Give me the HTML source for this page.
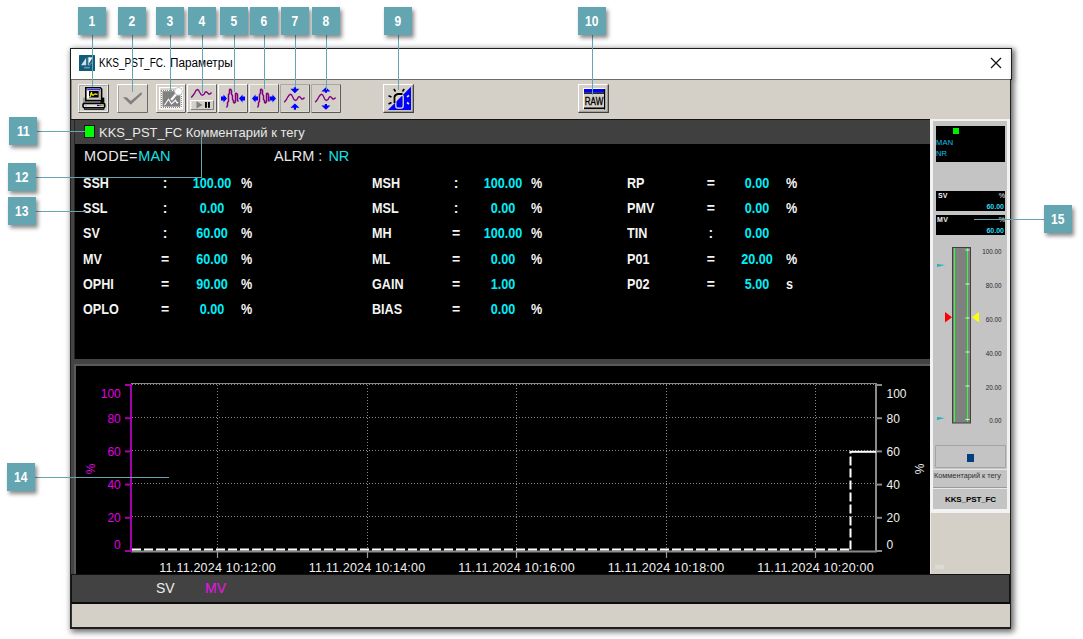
<!DOCTYPE html>
<html><head><meta charset="utf-8">
<style>
*{margin:0;padding:0;box-sizing:border-box;}
html,body{width:1083px;height:639px;overflow:hidden;background:#fff;position:relative;font-family:"Liberation Sans",sans-serif;}
.a{position:absolute;}
.cb{position:absolute;width:28px;height:28px;background:#64a5b2;color:#fff;font-weight:bold;font-size:14px;text-align:center;line-height:29px;box-shadow:2px 3px 4px rgba(0,0,0,0.45);z-index:20;}
.vl{position:absolute;width:1px;background:#64a5b2;z-index:19;}
.hl{position:absolute;height:1px;background:#64a5b2;z-index:19;}
.btn{position:absolute;top:84px;width:30px;height:29px;border-top:1px solid #fff;border-left:1px solid #fff;border-right:1px solid #6a6a6a;border-bottom:1px solid #6a6a6a;}
.btn2{position:absolute;top:84px;width:31px;height:29px;border-top:1px solid #fff;border-left:1px solid #fff;border-right:2px solid #404040;border-bottom:2px solid #404040;}
.btn svg,.btn2 svg{position:absolute;left:0;top:0;}
.lbl{position:absolute;color:#f4f4f4;font-weight:bold;font-size:14px;line-height:14px;transform:scaleX(0.9);transform-origin:0 0;white-space:nowrap;}
.val{position:absolute;color:#00eef8;font-weight:bold;font-size:14px;line-height:14px;text-align:center;width:60px;transform:scaleX(0.9);}
.sep{position:absolute;color:#f4f4f4;font-weight:bold;font-size:14px;line-height:14px;text-align:center;width:10px;}
.yl{position:absolute;color:#e000e0;font-size:12px;line-height:14px;text-align:right;width:30px;}
.yr{position:absolute;color:#f0f0f0;font-size:12px;line-height:14px;text-align:left;width:30px;}
.xl{position:absolute;color:#f0f0f0;font-size:12.5px;letter-spacing:0.2px;line-height:14px;text-align:center;width:140px;}
.rs{position:absolute;color:#282828;font-size:6.3px;line-height:8px;text-align:right;width:30px;}
</style></head><body>

<!-- window -->
<div class="a" style="left:70px;top:48px;width:941px;height:581px;border:1px solid #1e1e1e;border-bottom:2px solid #1e1e1e;box-shadow:2px 2px 6px 1px rgba(0,0,0,0.6);background:#d4d0c8;"></div>
<!-- title bar -->
<div class="a" style="left:71px;top:49px;width:940px;height:30px;background:#fff;"></div>
<div class="a" style="left:1011px;top:48px;width:1px;height:32px;background:#1e1e1e;box-shadow:2px 1px 4px rgba(0,0,0,0.5);"></div>
<div class="a" style="left:1010px;top:48px;width:1px;height:1px;background:#1e1e1e;"></div>
<svg class="a" style="left:79px;top:55px" width="16" height="16" viewBox="0 0 16 16">
<rect width="16" height="16" rx="0.5" fill="#135b7c"/>
<polygon points="2,10.3 7.2,2.8 7.2,10.3" fill="#cfe0ea"/>
<rect x="8.8" y="2.2" width="1.1" height="8.1" fill="#a9c6d6"/>
<polygon points="9.9,2.2 13.6,2.6 9.9,8.6" fill="#ffffff"/>
<path d="M10.2 10.3 L14 6.6" stroke="#7fa6bc" stroke-width="1"/>
<rect x="5.2" y="11.8" width="5.6" height="1.6" fill="#6d98b0"/>
</svg>
<div class="a" style="left:99.3px;top:56px;font-size:12px;line-height:14px;color:#000;white-space:nowrap;transform:scaleX(0.835);transform-origin:0 0;">KKS_PST_FC.</div>
<div class="a" style="left:170px;top:56px;font-size:12px;line-height:14px;color:#000;white-space:nowrap;transform:scaleX(0.98);transform-origin:0 0;">Параметры</div>
<svg class="a" style="left:990px;top:57px" width="12" height="12" viewBox="0 0 12 12"><path d="M1 1 L11 11 M11 1 L1 11" stroke="#111" stroke-width="1.2"/></svg>
<!-- toolbar line -->
<div class="a" style="left:71px;top:79px;width:939px;height:1px;background:#6e6a64;"></div>



<!-- main area -->
<div class="a" style="left:71px;top:119px;width:4px;height:455px;background:#444;"></div>
<div class="a" style="left:74px;top:119px;width:1px;height:240px;background:#262626;"></div>
<div class="a" style="left:71px;top:80px;width:1px;height:39px;background:#8a8680;"></div>
<!-- top panel -->
<div class="a" style="left:75px;top:119px;width:855px;height:240px;background:#000;"></div>
<div class="a" style="left:75px;top:119px;width:855px;height:24.5px;background:#404040;"></div>
<div class="a" style="left:71px;top:119px;width:859px;height:1px;background:#141414;"></div>
<div class="a" style="left:84px;top:125px;width:11px;height:12.5px;background:#00ff00;border:1px solid #111;"></div>
<div class="a" style="left:99px;top:125px;font-size:13px;line-height:16px;color:#e8e8e8;white-space:nowrap;">KKS_PST_FC Комментарий к тегу</div>
<div class="a" style="left:84px;top:148px;font-size:14.5px;line-height:17px;color:#e8e8e8;white-space:nowrap;letter-spacing:0.4px;">MODE=</div><div class="a" style="left:138.3px;top:148px;font-size:14.5px;line-height:17px;color:#18e0ea;white-space:nowrap;">MAN</div>
<div class="a" style="left:274px;top:148px;font-size:14.5px;line-height:17px;color:#e8e8e8;white-space:nowrap;">ALRM :</div><div class="a" style="left:328.4px;top:148px;font-size:14.5px;line-height:17px;color:#18e0ea;white-space:nowrap;">NR</div>
<!-- band -->
<div class="a" style="left:75px;top:359px;width:855px;height:5px;background:#434343;"></div>
<div class="a" style="left:74px;top:364px;width:856px;height:2px;background:#5a5a5a;"></div>
<div class="a" style="left:74px;top:364px;width:2px;height:210px;background:#5a5a5a;"></div>
<!-- chart panel -->
<div class="a" style="left:76px;top:366px;width:854px;height:208px;background:#000;"></div>
<!-- table -->
<div class="lbl" style="left:82.6px;top:175.8px">SSH</div>
<div class="sep" style="left:160.0px;top:175.8px">:</div>
<div class="val" style="left:181.7px;top:175.8px">100.00</div>
<div class="lbl" style="left:240.5px;top:175.8px">%</div>
<div class="lbl" style="left:82.6px;top:201.1px">SSL</div>
<div class="sep" style="left:160.0px;top:201.1px">:</div>
<div class="val" style="left:181.7px;top:201.1px">0.00</div>
<div class="lbl" style="left:240.5px;top:201.1px">%</div>
<div class="lbl" style="left:82.6px;top:226.4px">SV</div>
<div class="sep" style="left:160.0px;top:226.4px">:</div>
<div class="val" style="left:181.7px;top:226.4px">60.00</div>
<div class="lbl" style="left:240.5px;top:226.4px">%</div>
<div class="lbl" style="left:82.6px;top:251.7px">MV</div>
<div class="sep" style="left:160.0px;top:251.7px">=</div>
<div class="val" style="left:181.7px;top:251.7px">60.00</div>
<div class="lbl" style="left:240.5px;top:251.7px">%</div>
<div class="lbl" style="left:82.6px;top:277.0px">OPHI</div>
<div class="sep" style="left:160.0px;top:277.0px">=</div>
<div class="val" style="left:181.7px;top:277.0px">90.00</div>
<div class="lbl" style="left:240.5px;top:277.0px">%</div>
<div class="lbl" style="left:82.6px;top:302.3px">OPLO</div>
<div class="sep" style="left:160.0px;top:302.3px">=</div>
<div class="val" style="left:181.7px;top:302.3px">0.00</div>
<div class="lbl" style="left:240.5px;top:302.3px">%</div>
<div class="lbl" style="left:372.2px;top:175.8px">MSH</div>
<div class="sep" style="left:451.0px;top:175.8px">:</div>
<div class="val" style="left:472.6px;top:175.8px">100.00</div>
<div class="lbl" style="left:531.0px;top:175.8px">%</div>
<div class="lbl" style="left:372.2px;top:201.1px">MSL</div>
<div class="sep" style="left:451.0px;top:201.1px">:</div>
<div class="val" style="left:472.6px;top:201.1px">0.00</div>
<div class="lbl" style="left:531.0px;top:201.1px">%</div>
<div class="lbl" style="left:372.2px;top:226.4px">MH</div>
<div class="sep" style="left:451.0px;top:226.4px">=</div>
<div class="val" style="left:472.6px;top:226.4px">100.00</div>
<div class="lbl" style="left:531.0px;top:226.4px">%</div>
<div class="lbl" style="left:372.2px;top:251.7px">ML</div>
<div class="sep" style="left:451.0px;top:251.7px">=</div>
<div class="val" style="left:472.6px;top:251.7px">0.00</div>
<div class="lbl" style="left:531.0px;top:251.7px">%</div>
<div class="lbl" style="left:372.2px;top:277.0px">GAIN</div>
<div class="sep" style="left:451.0px;top:277.0px">=</div>
<div class="val" style="left:472.6px;top:277.0px">1.00</div>
<div class="lbl" style="left:372.2px;top:302.3px">BIAS</div>
<div class="sep" style="left:451.0px;top:302.3px">=</div>
<div class="val" style="left:472.6px;top:302.3px">0.00</div>
<div class="lbl" style="left:531.0px;top:302.3px">%</div>
<div class="lbl" style="left:627.3px;top:175.8px">RP</div>
<div class="sep" style="left:705.8px;top:175.8px">=</div>
<div class="val" style="left:727.2px;top:175.8px">0.00</div>
<div class="lbl" style="left:786.2px;top:175.8px">%</div>
<div class="lbl" style="left:627.3px;top:201.1px">PMV</div>
<div class="sep" style="left:705.8px;top:201.1px">=</div>
<div class="val" style="left:727.2px;top:201.1px">0.00</div>
<div class="lbl" style="left:786.2px;top:201.1px">%</div>
<div class="lbl" style="left:627.3px;top:226.4px">TIN</div>
<div class="sep" style="left:705.8px;top:226.4px">:</div>
<div class="val" style="left:727.2px;top:226.4px">0.00</div>
<div class="lbl" style="left:627.3px;top:251.7px">P01</div>
<div class="sep" style="left:705.8px;top:251.7px">=</div>
<div class="val" style="left:727.2px;top:251.7px">20.00</div>
<div class="lbl" style="left:786.2px;top:251.7px">%</div>
<div class="lbl" style="left:627.3px;top:277.0px">P02</div>
<div class="sep" style="left:705.8px;top:277.0px">=</div>
<div class="val" style="left:727.2px;top:277.0px">5.00</div>
<div class="lbl" style="left:786.2px;top:277.0px">s</div>
<!-- chart -->
<svg class="a" style="left:76px;top:366px" width="854" height="208" viewBox="76 366 854 208">
<line x1="131" y1="383.5" x2="876" y2="383.5" stroke="#8a8a8a" stroke-width="1"/>
<line x1="132" y1="384.5" x2="876" y2="384.5" stroke="#888" stroke-width="1" stroke-dasharray="1 2"/>
<line x1="132" y1="417.5" x2="876" y2="417.5" stroke="#888" stroke-width="1" stroke-dasharray="1 2"/>
<line x1="132" y1="450.5" x2="876" y2="450.5" stroke="#888" stroke-width="1" stroke-dasharray="1 2"/>
<line x1="132" y1="483.5" x2="876" y2="483.5" stroke="#888" stroke-width="1" stroke-dasharray="1 2"/>
<line x1="132" y1="516.5" x2="876" y2="516.5" stroke="#888" stroke-width="1" stroke-dasharray="1 2"/>
<line x1="217.5" y1="385" x2="217.5" y2="551" stroke="#888" stroke-width="1" stroke-dasharray="1 2"/>
<line x1="217.5" y1="551" x2="217.5" y2="558" stroke="#9a9a9a" stroke-width="1.2"/>
<line x1="367.5" y1="385" x2="367.5" y2="551" stroke="#888" stroke-width="1" stroke-dasharray="1 2"/>
<line x1="367.5" y1="551" x2="367.5" y2="558" stroke="#9a9a9a" stroke-width="1.2"/>
<line x1="516.5" y1="385" x2="516.5" y2="551" stroke="#888" stroke-width="1" stroke-dasharray="1 2"/>
<line x1="516.5" y1="551" x2="516.5" y2="558" stroke="#9a9a9a" stroke-width="1.2"/>
<line x1="666.5" y1="385" x2="666.5" y2="551" stroke="#888" stroke-width="1" stroke-dasharray="1 2"/>
<line x1="666.5" y1="551" x2="666.5" y2="558" stroke="#9a9a9a" stroke-width="1.2"/>
<line x1="815.5" y1="385" x2="815.5" y2="551" stroke="#888" stroke-width="1" stroke-dasharray="1 2"/>
<line x1="815.5" y1="551" x2="815.5" y2="558" stroke="#9a9a9a" stroke-width="1.2"/>
<line x1="131" y1="551.5" x2="877" y2="551.5" stroke="#8a8a8a" stroke-width="2"/>
<line x1="876" y1="383" x2="876" y2="552" stroke="#8a8a8a" stroke-width="2"/>
<line x1="876" y1="385.0" x2="882" y2="385.0" stroke="#8a8a8a" stroke-width="2"/>
<line x1="125" y1="385.0" x2="131" y2="385.0" stroke="#a800b0" stroke-width="2"/>
<line x1="876" y1="418.2" x2="882" y2="418.2" stroke="#8a8a8a" stroke-width="2"/>
<line x1="125" y1="418.2" x2="131" y2="418.2" stroke="#a800b0" stroke-width="2"/>
<line x1="876" y1="451.4" x2="882" y2="451.4" stroke="#8a8a8a" stroke-width="2"/>
<line x1="125" y1="451.4" x2="131" y2="451.4" stroke="#a800b0" stroke-width="2"/>
<line x1="876" y1="484.6" x2="882" y2="484.6" stroke="#8a8a8a" stroke-width="2"/>
<line x1="125" y1="484.6" x2="131" y2="484.6" stroke="#a800b0" stroke-width="2"/>
<line x1="876" y1="517.8" x2="882" y2="517.8" stroke="#8a8a8a" stroke-width="2"/>
<line x1="125" y1="517.8" x2="131" y2="517.8" stroke="#a800b0" stroke-width="2"/>
<line x1="876" y1="551.0" x2="882" y2="551.0" stroke="#8a8a8a" stroke-width="2"/>
<line x1="125" y1="551.0" x2="131" y2="551.0" stroke="#a800b0" stroke-width="2"/>
<line x1="131" y1="384" x2="131" y2="552" stroke="#a800b0" stroke-width="2"/>
<path d="M132 549.5 H850.5" stroke="#fff" stroke-width="2" stroke-dasharray="9 3" fill="none"/>
<path d="M850.5 549.5 V451.8" stroke="#fff" stroke-width="2" stroke-dasharray="9 3" fill="none"/>
<path d="M849.5 451.8 H876" stroke="#fff" stroke-width="2" fill="none"/>
</svg>
<div class="yl" style="left:90.8px;top:386.6px">100</div>
<div class="yr" style="left:886.5px;top:386.6px">100</div>
<div class="yl" style="left:90.8px;top:411.8px">80</div>
<div class="yr" style="left:886.5px;top:411.8px">80</div>
<div class="yl" style="left:90.8px;top:444.8px">60</div>
<div class="yr" style="left:886.5px;top:444.8px">60</div>
<div class="yl" style="left:90.8px;top:478.4px">40</div>
<div class="yr" style="left:886.5px;top:478.4px">40</div>
<div class="yl" style="left:90.8px;top:511.0px">20</div>
<div class="yr" style="left:886.5px;top:511.0px">20</div>
<div class="yl" style="left:90.8px;top:537.6px">0</div>
<div class="yr" style="left:886.5px;top:537.6px">0</div>
<div class="xl" style="left:147.7px;top:560.5px">11.11.2024 10:12:00</div>
<div class="xl" style="left:297.0px;top:560.5px">11.11.2024 10:14:00</div>
<div class="xl" style="left:446.5px;top:560.5px">11.11.2024 10:16:00</div>
<div class="xl" style="left:596.0px;top:560.5px">11.11.2024 10:18:00</div>
<div class="xl" style="left:745.5px;top:560.5px">11.11.2024 10:20:00</div>
<div class="a" style="left:83px;top:462px;width:16px;height:14px;font-size:12px;line-height:14px;color:#e000e0;transform:rotate(-90deg);text-align:center;">%</div>
<div class="a" style="left:912px;top:462px;width:16px;height:14px;font-size:12px;line-height:14px;color:#f0f0f0;transform:rotate(-90deg);text-align:center;">%</div>
<!-- right panel -->
<div class="a" style="left:930px;top:119px;width:80px;height:394px;background:#f2f2f2;"></div>
<div class="a" style="left:933px;top:121px;width:74px;height:388px;background:#c4c4c4;"></div>
<div class="a" style="left:936px;top:126px;width:69px;height:36px;background:#000;"></div>
<div class="a" style="left:953px;top:127.5px;width:6px;height:6.5px;background:#00ee00;"></div>
<div class="a" style="left:936px;top:138px;font-size:7.5px;line-height:9px;color:#12c0ec;letter-spacing:0.3px;">MAN</div>
<div class="a" style="left:936px;top:149px;font-size:7.5px;line-height:9px;color:#12c0ec;">NR</div>
<div class="a" style="left:936px;top:190.5px;width:69px;height:20px;background:#000;"></div>
<div class="a" style="left:938px;top:191px;font-size:7px;line-height:9px;color:#f0f0f0;font-weight:bold;">SV</div>
<div class="a" style="left:995px;top:191px;font-size:7px;line-height:9px;color:#f0f0f0;width:10px;text-align:right;">%</div>
<div class="a" style="left:965px;top:202px;font-size:7px;line-height:9px;color:#30d8f0;width:39px;text-align:right;font-weight:bold;">60.00</div>
<div class="a" style="left:936px;top:214.5px;width:69px;height:20px;background:#000;"></div>
<div class="a" style="left:937px;top:215px;font-size:7px;line-height:9px;color:#f0f0f0;font-weight:bold;letter-spacing:0.5px;">MV</div>
<div class="a" style="left:995px;top:215px;font-size:7px;line-height:9px;color:#f0f0f0;width:10px;text-align:right;">%</div>
<div class="a" style="left:965px;top:226px;font-size:7px;line-height:9px;color:#30d8f0;width:39px;text-align:right;font-weight:bold;">60.00</div>
<svg class="a" style="left:930px;top:240px" width="80" height="190" viewBox="930 240 80 190">
<rect x="952.5" y="247.5" width="18" height="175.5" fill="#808080" stroke="#404040" stroke-width="1"/>
<line x1="954.5" y1="248" x2="954.5" y2="422" stroke="#30ff30" stroke-width="1"/>
<line x1="967.5" y1="248" x2="967.5" y2="422" stroke="#30ff30" stroke-width="1"/>
<path d="M965.5 250 H969.5 M965.5 284 H969.5 M965.5 318 H969.5 M965.5 352 H969.5 M965.5 386 H969.5 M965.5 419.5 H969.5" stroke="#d0ffd0" stroke-width="1"/>
<path d="M945 312 L952 317.3 L945 322.5 Z" fill="#ff0000"/>
<path d="M979 312 L972 317.3 L979 322.5 Z" fill="#ffff00"/>
<path d="M937 264 L945 265 L937 267 Z" fill="#20b0c0"/>
<path d="M937 417 L945 418 L937 420 Z" fill="#20b0c0"/>
</svg>
<div class="rs" style="left:971.5px;top:247.5px;">100.00</div>
<div class="rs" style="left:971.5px;top:281.5px;">80.00</div>
<div class="rs" style="left:971.5px;top:315.5px;">60.00</div>
<div class="rs" style="left:971.5px;top:349.5px;">40.00</div>
<div class="rs" style="left:971.5px;top:383.5px;">20.00</div>
<div class="rs" style="left:971.5px;top:416.5px;">0.00</div>
<div class="a" style="left:935px;top:445px;width:71px;height:23px;border:1px solid #a4a4a4;border-radius:1px;"></div>
<div class="a" style="left:933px;top:468.5px;width:74px;height:1.5px;background:#e4e4e4;"></div>
<div class="a" style="left:967px;top:454px;width:7px;height:7.5px;background:#003f7f;"></div>
<div class="a" style="left:934px;top:471px;font-size:7.3px;line-height:9px;color:#303030;white-space:nowrap;">Комментарий к тегу</div>
<div class="a" style="left:933px;top:487px;width:74px;height:1px;background:#9a9a9a;"></div>
<div class="a" style="left:933px;top:488px;width:74px;height:1px;background:#e8e8e8;"></div>
<div class="a" style="left:930px;top:495px;width:81px;text-align:center;font-size:8px;line-height:10px;color:#000;font-weight:bold;letter-spacing:-0.1px;">KKS_PST_FC</div>
<div class="a" style="left:930px;top:513px;width:1px;height:61px;background:#eceae4;"></div>
<div class="a" style="left:935px;top:565px;width:9px;height:4px;background:#dcdad6;"></div>
<!-- legend -->
<div class="a" style="left:71px;top:574px;width:939px;height:30px;background:#424242;border:1px solid #111;border-bottom:2px solid #0c0c0c;"></div>
<div class="a" style="left:71px;top:604px;width:1px;height:23px;background:#333;"></div>
<div class="a" style="left:156px;top:581px;font-size:14px;line-height:15px;color:#ececec;">SV</div>
<div class="a" style="left:205px;top:581px;font-size:14px;line-height:15px;color:#f010f0;">MV</div>

<!-- toolbar buttons -->
<svg class="a" style="left:78px;top:84px" width="31" height="29" viewBox="-1 0 31 29">
<path d="M-0.5 28.5 V0.5 H29.5" fill="none" stroke="#f4f4f4"/>
<path d="M0.5 28 V1.5 H29" fill="none" stroke="#a8a8a8"/>
<path d="M-0.5 28.5 H29.5 V0.5" fill="none" stroke="#555"/>
<path d="M0.5 27.5 H28.5 V1.5" fill="none" stroke="#ebebeb"/>
<rect x="3.9" y="13.6" width="2.3" height="5.2" fill="#9a9a9a"/>
<rect x="21.5" y="13.6" width="3.8" height="5.2" fill="#000"/>
<path d="M6.8 3.8 H21.4 L22.6 5 V16.6 H6.8 Z" fill="#fff" stroke="#000" stroke-width="1.6"/>
<path d="M21 5 V15.2 H8" fill="none" stroke="#a0a0a0" stroke-width="1.5"/>
<rect x="8.2" y="5.2" width="12.9" height="1.1" fill="#0000ff"/>
<rect x="10" y="7" width="9.7" height="6.6" fill="#000"/>
<path d="M10.3 12.7 L11.6 12.2 L11.9 9.2 L12.6 8.6 L13.1 10.8 L14.2 11.3 L15.2 10.2 L16.4 9.9 L17.3 10.4 L18.6 10" fill="none" stroke="#ffff00" stroke-width="1.1"/>
<rect x="4" y="19.4" width="21.8" height="4.4" rx="1.6" fill="#e2dfd8" stroke="#000" stroke-width="1.6"/>
<rect x="5.1" y="23.5" width="20.2" height="2.3" fill="#000"/>
<rect x="6" y="24.3" width="18.5" height="0.6" fill="#777"/>
<rect x="18" y="20.9" width="2.2" height="1.2" fill="#0000ff"/><rect x="20.2" y="20.9" width="2" height="1.2" fill="#ff2020"/><rect x="22.2" y="20.9" width="2.6" height="1.2" fill="#20e020"/>
<rect x="6.1" y="21.1" width="1.6" height="0.7" fill="#999"/>
</svg>
<svg class="a" style="left:117px;top:84px" width="31" height="29" viewBox="0 0 31 29">
<path d="M0.5 28.5 V0.5 H30.5" fill="none" stroke="#fff"/>
<path d="M1.5 28 V1.5" stroke="#a8a49c"/>
<path d="M0.5 28.5 H30.5 V0.5" fill="none" stroke="#6a6a6a"/>
<path d="M5.9 13.2 L9.7 13.2 L13.75 17 L24.4 7.9 L25 10.3 L13.75 20.8 Z" fill="#808080"/>
</svg>
<svg class="a" style="left:156px;top:84px" width="30" height="29" viewBox="0 0 30 29">
<path d="M0.5 28 V0.5 H29" fill="none" stroke="#fff"/>
<path d="M0.5 28.5 H29.5 V0.5" fill="none" stroke="#5a5a5a"/>
<path d="M1.5 27.5 H28.5 V1.5" fill="none" stroke="#e4e2dc" stroke-width="0.6"/>
<rect x="3" y="3" width="24" height="22.5" fill="#fff"/>
<rect x="4.2" y="4.2" width="21.6" height="20.1" fill="#d4d0c8"/>
<g shape-rendering="crispEdges">
<rect x="5.5" y="6.5" width="20" height="17" fill="none" stroke="#8a8a8a" stroke-width="1"/>
<rect x="5.5" y="6.5" width="20" height="17" fill="none" stroke="#fff" stroke-width="1" stroke-dasharray="1 1"/>
</g>
<rect x="6.75" y="7.25" width="17.25" height="15.25" fill="#808080"/>
<path d="M8.5 21.25 L12.5 15.25 L15.5 20 L19.5 16.25 L21 19 L22.25 18.25" fill="none" stroke="#fff" stroke-width="1.1"/>
<path d="M15.2 15.8 L20.2 10.2" stroke="#a0a0a0" stroke-width="3.2"/>
<path d="M15.2 15.8 L20.2 10.2" stroke="#fff" stroke-width="2"/>
<circle cx="22.5" cy="7.4" r="3.9" fill="#fff" stroke="#b0b0b0" stroke-width="0.7"/>

</svg>
<svg class="a" style="left:187px;top:84px" width="30" height="29" viewBox="0 0 30 29">
<path d="M0.5 28 V0.5 H29" fill="none" stroke="#fff"/>
<path d="M0.5 28.5 H29.5 V0.5" fill="none" stroke="#5a5a5a"/>
<path d="M1.5 27.5 H28.5 V1.5" fill="none" stroke="#e4e2dc" stroke-width="0.6"/>
<g transform="translate(1,0)">
<path d="M3.25 13.5 L5.5 10.75 L6.75 9 L8 6.5 L9.25 5.5 L10.5 6 L11.5 8 L13 10.5 L14.5 11.25 L16 10.25 L17.25 8 L18.25 7.75 L19.5 8.75 L21 10.25 L22.5 9.75 L23.5 8.5" fill="none" stroke="#800080" stroke-width="1.35"/>
<rect x="2.5" y="16" width="23" height="9.5" fill="#d4d0c8"/>
<path d="M2.75 25.5 V16.5 H25.5" fill="none" stroke="#fff" stroke-width="1.2"/>
<path d="M3 25.5 H25.5 V16.5" fill="none" stroke="#808080" stroke-width="1"/>
<path d="M8.5 17.25 L14.5 21 L8.5 24.5 Z" fill="#808080"/>
<rect x="17" y="18" width="1.9" height="5.8" fill="#000"/><rect x="20" y="18" width="1.9" height="5.8" fill="#000"/>

</g>
</svg>
<svg class="a" style="left:218px;top:84px" width="30" height="29" viewBox="0 0 30 29">
<path d="M0.5 28 V0.5 H29" fill="none" stroke="#fff"/>
<path d="M0.5 28.5 H29.5 V0.5" fill="none" stroke="#5a5a5a"/>
<path d="M1.5 27.5 H28.5 V1.5" fill="none" stroke="#e4e2dc" stroke-width="0.6"/>
<g transform="translate(1,0)">
<path d="M7.5 23.5 L8.5 21.5 L8.5 18.5 L9.5 17.5 L9.5 10.5 L10.5 9.5 L10.5 5.5 L11.5 5.2 L12.5 6.5 L12.5 10.5 L13.5 11.5 L13.5 15.5 L14.5 16.5 L14.5 18.5 L15.5 19.2 L16.5 17.5 L16.5 9.5 L17.5 9.2 L18.5 10.5 L18.5 16.5 L19.5 17.5" fill="none" stroke="#800080" stroke-width="1.5" stroke-linejoin="bevel"/>
<path d="M2 12.5 H4.5 V10.5 L8 14.5 L4.5 18.5 V16.5 H2 Z" fill="#0000ff"/>
<path d="M26 12.5 H23.5 V10.5 L20 14.5 L23.5 18.5 V16.5 H26 Z" fill="#0000ff"/>

</g>
</svg>
<svg class="a" style="left:249px;top:84px" width="30" height="29" viewBox="0 0 30 29">
<path d="M0.5 28 V0.5 H29" fill="none" stroke="#f0f0f0"/>
<path d="M0.5 28.5 H29.5 V0.5" fill="none" stroke="#5a5a5a"/>
<path d="M1.5 27.5 H28.5 V1.5" fill="none" stroke="#e4e2dc" stroke-width="0.6"/>
<g transform="translate(1,0)">
<path d="M7.5 23.5 L8.5 21.5 L8.5 18.5 L9.5 17.5 L9.5 10.5 L10.5 9.5 L10.5 5.5 L11.5 5.2 L12.5 6.5 L12.5 10.5 L13.5 11.5 L13.5 15.5 L14.5 16.5 L14.5 18.5 L15.5 19.2 L16.5 17.5 L16.5 9.5 L17.5 9.2 L18.5 10.5 L18.5 16.5 L19.5 17.5" fill="none" stroke="#800080" stroke-width="1.5" stroke-linejoin="bevel"/>
<path d="M8 12.5 H5.5 V10.5 L2 14.5 L5.5 18.5 V16.5 H8 Z" fill="#0000ff"/>
<path d="M19.5 12.5 H22.5 V10.5 L26 14.5 L22.5 18.5 V16.5 H19.5 Z" fill="#0000ff"/>

</g>
</svg>
<svg class="a" style="left:280px;top:84px" width="30" height="29" viewBox="0 0 30 29">
<path d="M0.5 28 V0.5 H29" fill="none" stroke="#a8a8a8"/>
<path d="M0.5 28.5 H29.5 V0.5" fill="none" stroke="#5a5a5a"/>
<path d="M1.5 27.5 H28.5 V1.5" fill="none" stroke="#e4e2dc" stroke-width="0.6"/>
<path d="M4.25 18.25 L6.5 15.5 L7.75 13 L9 11.25 L10.25 10.25 L11.5 10.75 L12.5 12.5 L14 15.5 L15.5 16.5 L17 15.5 L18.25 13.25 L19.25 12.5 L20.5 13.5 L22 15.25 L23.5 14.75 L24.5 13.5" fill="none" stroke="#800080" stroke-width="1.35"/>
<path d="M13.8 3.2 H16 V4.8 H19.4 L14.9 9.2 L10.4 4.8 H13.8 Z" fill="#0000ff"/>
<path d="M13.8 25.8 H16 V23.7 H19.4 L14.9 19.6 L10.4 23.7 H13.8 Z" fill="#0000ff"/>

</svg>
<svg class="a" style="left:311px;top:84px" width="30" height="29" viewBox="0 0 30 29">
<path d="M0.5 28 V0.5 H29" fill="none" stroke="#a8a8a8"/>
<path d="M0.5 28.5 H29.5 V0.5" fill="none" stroke="#5a5a5a"/>
<path d="M1.5 27.5 H28.5 V1.5" fill="none" stroke="#e4e2dc" stroke-width="0.6"/>
<path d="M4.25 18.25 L6.5 15.5 L7.75 13 L9 11.25 L10.25 10.25 L11.5 10.75 L12.5 12.5 L14 15.5 L15.5 16.5 L17 15.5 L18.25 13.25 L19.25 12.5 L20.5 13.5 L22 15.25 L23.5 14.75 L24.5 13.5" fill="none" stroke="#800080" stroke-width="1.35"/>
<path d="M13.8 8.8 H16 V7.4 H19.4 L14.9 3.2 L10.4 7.4 H13.8 Z" fill="#0000ff"/>
<path d="M13.8 20 H16 V21.4 H19.4 L14.9 25.8 L10.4 21.4 H13.8 Z" fill="#0000ff"/>

</svg>
<svg class="a" style="left:383px;top:84px" width="31" height="29" viewBox="0 0 31 29">
<rect x="0" y="0" width="31" height="29" fill="#d4d0c8"/>
<path d="M0.5 28 V0.5 H30" fill="none" stroke="#fff" stroke-width="1.1"/>
<path d="M0.5 28.3 H30.3 V0.5" fill="none" stroke="#404040" stroke-width="1.3"/>
<path d="M1.5 27.2 H29.3 V1.5" fill="none" stroke="#9a9a9a" stroke-width="0.8"/>
<path d="M4.9 26 L28 2.8 L28 26 Z" fill="#0000ff"/>
<path d="M12.8 22 V12.8 Q12.8 10.8 15 10.8 H18 Q20.2 10.8 20.2 12.8 V22 Q20.2 24.2 18 24.2 H15 Q12.8 24.2 12.8 22 Z" fill="none" stroke="#f4f0b0" stroke-width="1.2"/>
<path d="M11.5 19 V13 Q12 10.5 15 10 H19.5" fill="none" stroke="#000" stroke-width="1.8"/>
<path d="M10.8 5 L12.5 7.5 M21.2 5 L19.5 7.5 M5.5 11.8 L8.5 13 M5.5 20 L8.5 18.5" stroke="#000" stroke-width="1.6"/>
<path d="M24 12.9 L26 11.5 M24 18.5 L26 20" stroke="#f0ecc0" stroke-width="1.6"/>
</svg>
<svg class="a" style="left:578px;top:84px" width="31" height="29" viewBox="0 0 31 29">
<path d="M0.5 28 V0.5 H30" fill="none" stroke="#fff" stroke-width="1.1"/>
<path d="M0.5 28.3 H30.3 V0.5" fill="none" stroke="#404040" stroke-width="1.3"/>
<path d="M1.5 27.2 H29.3 V1.5" fill="none" stroke="#9a9a9a" stroke-width="0.8"/>
<rect x="5.5" y="4.2" width="21.5" height="21" fill="#d4d0c8"/>
<path d="M5.6 4.6 H26.6 M5.6 4.2 V25" stroke="#fff" stroke-width="1"/>
<rect x="6" y="5" width="20.5" height="3.6" fill="#0000ff"/>
<rect x="6" y="8.6" width="20.5" height="1.2" fill="#000"/>
<rect x="26" y="5" width="1.2" height="20.5" fill="#000"/>
<rect x="6" y="23.5" width="21" height="1.6" fill="#000"/>
<text x="16" y="20.7" font-family="Liberation Sans" font-size="10.5" text-anchor="middle" fill="#000" stroke="#000" stroke-width="0.35" textLength="18.5" lengthAdjust="spacingAndGlyphs">RAW</text>
</svg>

<!-- callouts -->
<div class="cb" style="left:78px;top:7px"><span style="display:inline-block;transform:scaleX(0.86)">1</span></div>
<div class="cb" style="left:118px;top:7px"><span style="display:inline-block;transform:scaleX(0.86)">2</span></div>
<div class="cb" style="left:156px;top:7px"><span style="display:inline-block;transform:scaleX(0.86)">3</span></div>
<div class="cb" style="left:188px;top:7px"><span style="display:inline-block;transform:scaleX(0.86)">4</span></div>
<div class="cb" style="left:220px;top:7px"><span style="display:inline-block;transform:scaleX(0.86)">5</span></div>
<div class="cb" style="left:250px;top:7px"><span style="display:inline-block;transform:scaleX(0.86)">6</span></div>
<div class="cb" style="left:281px;top:7px"><span style="display:inline-block;transform:scaleX(0.86)">7</span></div>
<div class="cb" style="left:312px;top:7px"><span style="display:inline-block;transform:scaleX(0.86)">8</span></div>
<div class="cb" style="left:384px;top:7px"><span style="display:inline-block;transform:scaleX(0.86)">9</span></div>
<div class="cb" style="left:578px;top:7px"><span style="display:inline-block;transform:scaleX(0.86)">10</span></div>
<div class="cb" style="left:9px;top:117px"><span style="display:inline-block;transform:scaleX(0.86)">11</span></div>
<div class="cb" style="left:8px;top:163px"><span style="display:inline-block;transform:scaleX(0.86)">12</span></div>
<div class="cb" style="left:8px;top:197px"><span style="display:inline-block;transform:scaleX(0.86)">13</span></div>
<div class="cb" style="left:7px;top:463px"><span style="display:inline-block;transform:scaleX(0.86)">14</span></div>
<div class="cb" style="left:1044px;top:205px"><span style="display:inline-block;transform:scaleX(0.86)">15</span></div>
<div class="vl" style="left:92px;top:35px;height:52px"></div>
<div class="vl" style="left:132px;top:35px;height:57px"></div>
<div class="vl" style="left:170px;top:35px;height:56px"></div>
<div class="vl" style="left:202px;top:35px;height:58px"></div>
<div class="vl" style="left:234px;top:35px;height:57px"></div>
<div class="vl" style="left:264px;top:35px;height:54px"></div>
<div class="vl" style="left:295px;top:35px;height:52px"></div>
<div class="vl" style="left:326px;top:35px;height:55px"></div>
<div class="vl" style="left:398px;top:35px;height:55px"></div>
<div class="vl" style="left:592px;top:35px;height:60px"></div>
<div class="hl" style="left:37px;top:131px;width:48px"></div>
<div class="hl" style="left:36px;top:177px;width:166px"></div>
<div class="vl" style="left:201px;top:134px;height:44px"></div>
<div class="hl" style="left:36px;top:211px;width:50px"></div>
<div class="hl" style="left:35px;top:477px;width:134px"></div>
<div class="hl" style="left:974px;top:219px;width:70px"></div>
</body></html>
